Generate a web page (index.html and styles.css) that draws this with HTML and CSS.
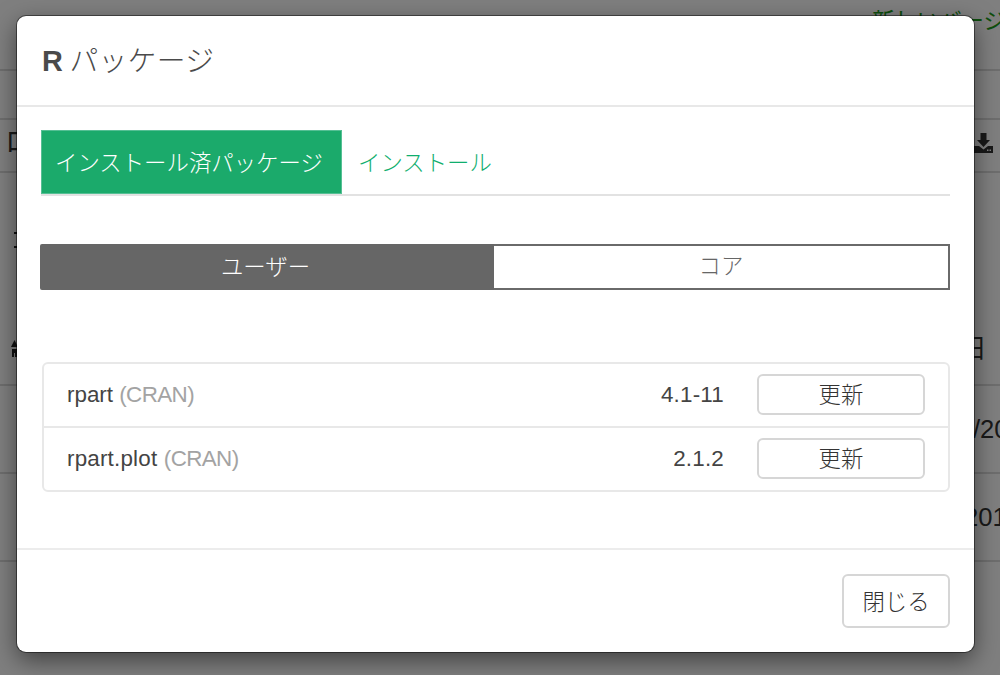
FILE: index.html
```html
<!DOCTYPE html>
<html lang="ja">
<head>
<meta charset="utf-8">
<title>R パッケージ</title>
<link rel="stylesheet" href="styles.css">
</head>
<body>
<div class="page">
  <div class="bg-row bg-top"><span></span><span class="bg-link">新しいバージョン</span></div>
  <div class="bg-row bg-sub"></div>
  <div class="bg-row bg-tools">
    <span class="bg-title">ロ</span>
    <svg class="bg-download" viewBox="0 0 19 20" aria-hidden="true"><path d="M6.500 0h6v7H16l-6.500 7L3 7h3.500z"/><path fill-rule="evenodd" d="M0 13h5l4.500 3.500L14 13h5v7H0zM13 16.500h1.500V18H13zM15.500 16.500H17V18h-1.500z"/></svg>
  </div>
  <div class="bg-row bg-head">
    <div class="bg-left">
      <i class="bg-mark"></i>
      <i class="bg-mark bg-mark-low"></i>
      <svg class="bg-sort" viewBox="0 0 7 17" aria-hidden="true"><path d="M3.500 0L7 7H0z"/><path d="M1 9h5l1 2v6H4v-4H3v4H1z"/></svg>
    </div>
    <span class="bg-cell">日</span>
  </div>
  <div class="bg-row bg-data"><span></span><span class="bg-cell bg-cell-date">/20</span></div>
  <div class="bg-row bg-data"><span></span><span class="bg-cell bg-cell-year">201</span></div>
</div>
<div class="backdrop"></div>
<div class="modal">
  <header class="modal-head"><h1 class="modal-title"><b>R</b> パッケージ</h1></header>
  <main class="modal-body">
    <nav class="tabs">
      <a class="tab tab-active">インストール済パッケージ</a>
      <a class="tab">インストール</a>
    </nav>
    <div class="segment">
      <div class="seg seg-on">ユーザー</div>
      <div class="seg seg-off">コア</div>
    </div>
    <ul class="pkg-list">
      <li class="pkg">
        <span class="pkg-name">rpart <span class="pkg-src">(CRAN)</span></span>
        <span class="pkg-ver">4.1-11</span>
        <button class="btn btn-update">更新</button>
      </li>
      <li class="pkg">
        <span class="pkg-name pkg-name-long">rpart.plot <span class="pkg-src">(CRAN)</span></span>
        <span class="pkg-ver">2.1.2</span>
        <button class="btn btn-update">更新</button>
      </li>
    </ul>
  </main>
  <footer class="modal-foot"><button class="btn btn-close">閉じる</button></footer>
</div>
</body>
</html>
```
FILE: styles.css
```css
* { box-sizing: border-box; }
html, body { margin: 0; height: 100%; overflow: hidden; }
body {
  font-family: "Liberation Sans", "Noto Sans CJK JP", sans-serif;
  font-size: 22.4px;
  color: #444;
  background: #fff;
}
.page { width: 1000px; height: 675px; overflow: hidden; }
.bg-row {
  display: flex;
  justify-content: space-between;
  align-items: center;
  border-bottom: 2px solid #ddd;
  white-space: nowrap;
}
.bg-top { height: 71px; align-items: flex-start; padding-top: 6px; }
.bg-link { width: 128px; overflow: hidden; color: #1c9c1c; line-height: 32px; }
.bg-sub { height: 49px; }
.bg-tools { height: 53px; padding: 0 0 6px 5px; }
.bg-title { font-size: 28px; line-height: 34px; color: #333; }
.bg-download { width: 19px; height: 20px; margin-right: 7px; fill: #333; }
.bg-head { height: 213px; align-items: flex-end; padding: 0 0 20px 11px; }
.bg-left { display: flex; flex-direction: column; align-items: flex-start; padding-bottom: 7px; }
.bg-mark { width: 6px; height: 2px; margin-left: 3px; background: #222; }
.bg-mark-low { margin-top: 12px; margin-bottom: 92px; }
.bg-sort { width: 7px; height: 17px; fill: #222; }
.bg-cell { width: 39px; font-size: 25.6px; line-height: 30px; color: #333; }
.bg-data { height: 88px; }
.bg-data .bg-cell-date { width: 27px; }
.bg-data .bg-cell-year { width: 36px; }

.backdrop { position: absolute; inset: 0; background: rgba(0, 0, 0, .5); }
.modal {
  position: absolute;
  left: 17px;
  top: 16px;
  width: 957px;
  height: 636px;
  display: flex;
  flex-direction: column;
  background: #fff;
  border-radius: 9px;
  box-shadow: 0 0 0 1px rgba(0, 0, 0, .45), 0 8px 24px rgba(0, 0, 0, .5);
}
.modal-head { height: 91px; border-bottom: 2px solid #e8e8e8; padding: 2px 25px 0; display: flex; align-items: center; }
.modal-title { margin: 0; font-size: 28.8px; font-weight: 300; color: #4a4a4a; line-height: 1; word-spacing: -2px; letter-spacing: .3px; }
.modal-title b { font-weight: 700; }
.modal-body { flex: 1; padding: 23px 24px 0 25px; }
.tabs { display: flex; height: 66px; border-bottom: 2px solid #e2e2e2; margin-left: -1px; }
.tab { display: flex; align-items: center; height: 64px; padding: 0 16px 3px; color: #0fae6e; font-weight: 300; }
.tab-active {
  width: 301px;
  padding: 0 13px 3px;
  background: #1baa6b;
  color: #fff;
  border: 1px solid #55bf94;
}
.segment { display: flex; height: 46px; margin: 48px 0 0 -2px; }
.seg { flex: 1; display: flex; align-items: center; justify-content: center; font-weight: 300; padding-bottom: 5px; }
.seg-on { flex: 0 0 454px; background: #666; color: #fff; border-radius: 2px 0 0 2px; padding-right: 3px; }
.seg-off { background: #fff; color: #666; border: 2px solid #6a6a6a; border-left: 0; padding-bottom: 7px; }
.pkg-list { list-style: none; margin: 72px 0 0; padding: 0; height: 130px; border: 2px solid #e8e8e8; border-radius: 6px; }
.pkg { display: flex; align-items: center; height: 62px; padding: 10px 23px 11px 23px; }
.pkg + .pkg { height: 64px; border-top: 2px solid #e8e8e8; }
.pkg-name { flex: 1; color: #444; }
.pkg-name-long { letter-spacing: .2px; }
.pkg-src { color: #a3a3a3; letter-spacing: -.6px; }
.pkg-ver { margin-right: 33px; color: #444; letter-spacing: .2px; }
.btn {
  font: inherit;
  font-weight: 300;
  color: #333;
  background: #fff;
  border: 2px solid #d6d6d6;
  border-radius: 6px;
  padding: 0 0 3px;
}
.btn-update { width: 168px; height: 41px; }
.modal-foot {
  height: 104px;
  border-top: 2px solid #ececec;
  padding: 24px 24px 0 0;
  display: flex;
  justify-content: flex-end;
  align-items: flex-start;
}
.btn-close { width: 108px; height: 54px; }
```
